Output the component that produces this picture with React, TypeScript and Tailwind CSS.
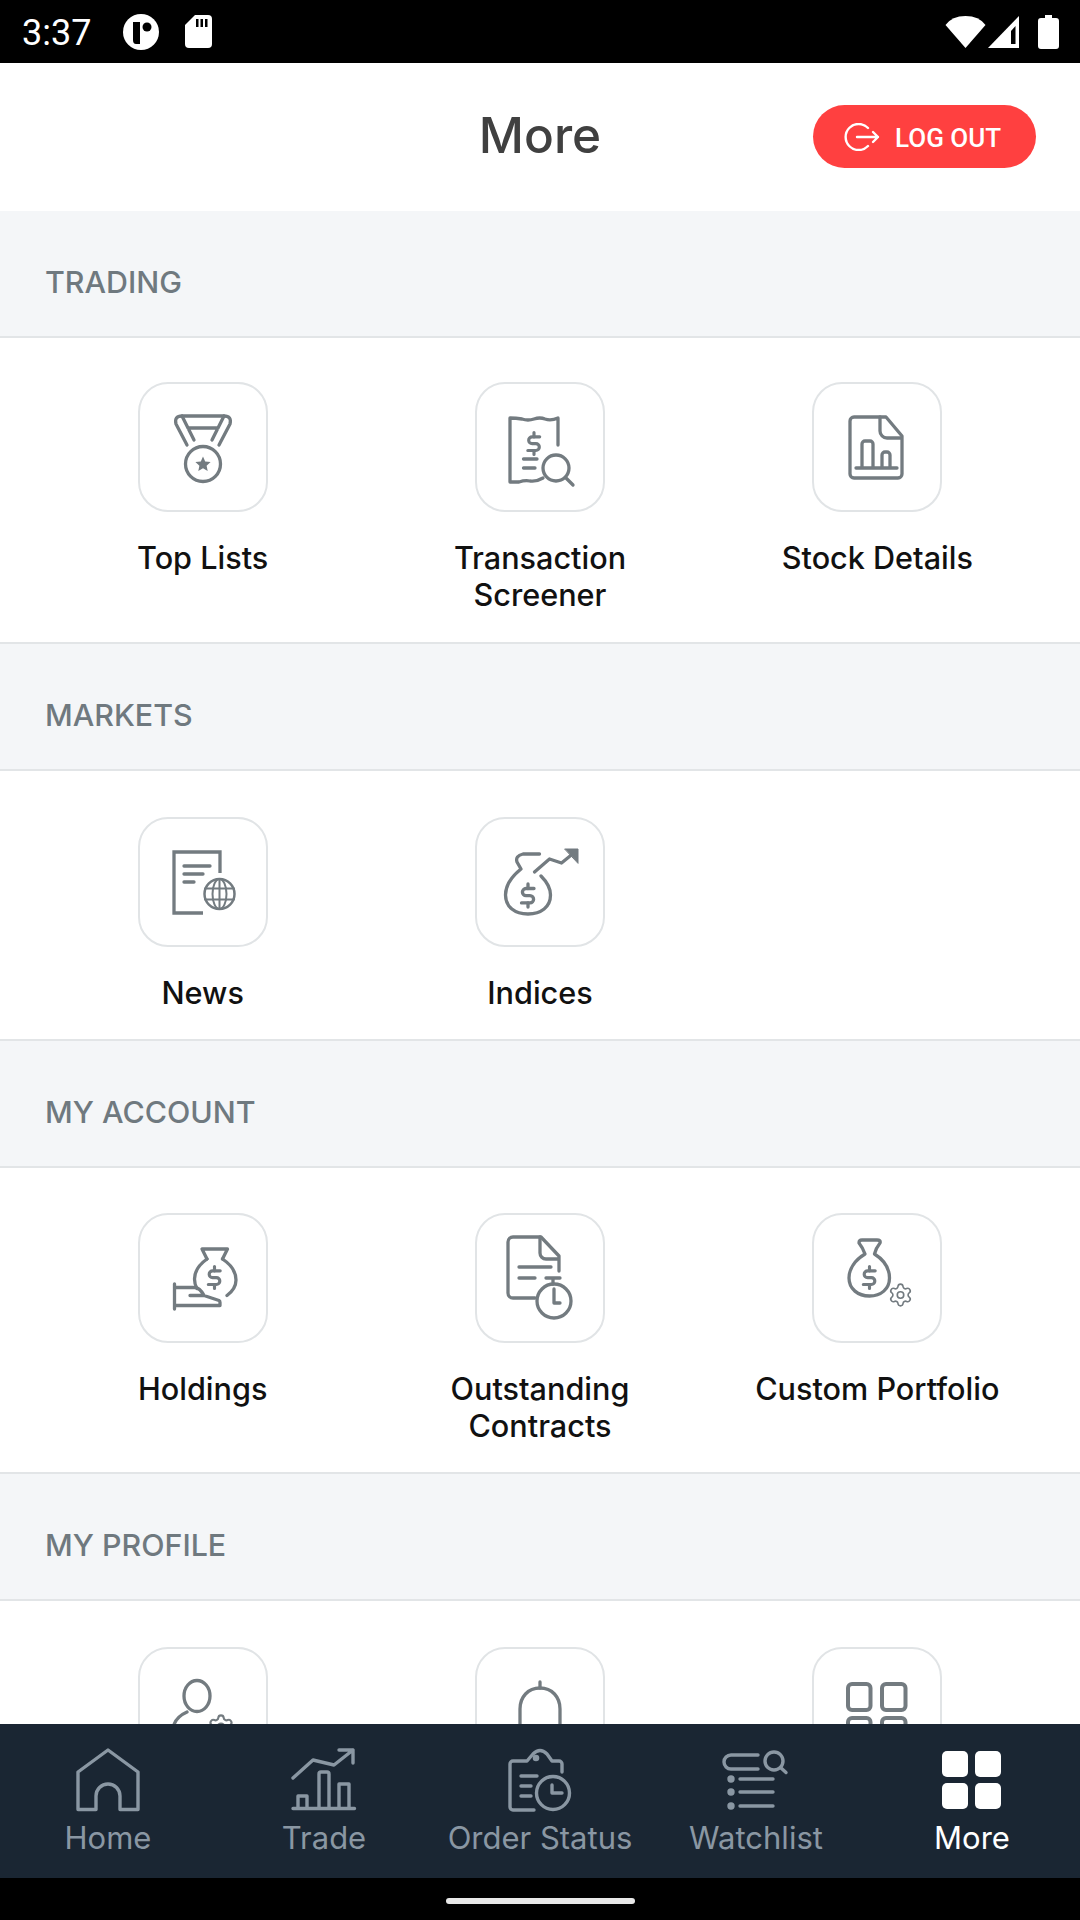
import type { ReactNode } from "react";
import { Settings } from "lucide-react";

// Dollar sign used inside the money bag icons
function Dollar({ x, y, s = 1 }: { x: number; y: number; s?: number }) {
  return (
    <g transform={`translate(${x} ${y}) scale(${s})`}>
      <path d="M6 -6.5 H-2 a3.6 3.6 0 0 0 0 7.2 H2 a3.6 3.6 0 0 1 0 7.2 H-6.5" />
      <path d="M0 -11 V-6.5 M0 8 V12" />
    </g>
  );
}

function BoxIcon({ children }: { children: ReactNode }) {
  return (
    <svg
      viewBox="0 0 130 130"
      className="w-[130px] h-[130px] shrink-0"
      fill="none"
      stroke="#737b80"
      strokeWidth="3.3"
      strokeLinecap="round"
      strokeLinejoin="round"
    >
      {children}
    </svg>
  );
}

const MedalIcon = (
  <BoxIcon>
    <circle cx="65" cy="82" r="17.5" />
    <path d="M65 74.5 l2.2 5 5.4 .6 -4 3.6 1.1 5.3 -4.7 -2.7 -4.7 2.7 1.1 -5.3 -4 -3.6 5.4 -.6z" fill="#737b80" stroke="none" />
    <path d="M49 63 L38 42 Q36 34 44 34 H86 Q94 34 92 42 L81 63" />
    <path d="M44 34 L56 58 M86 34 L74 58 M50 46 H80" />
  </BoxIcon>
);

const ReceiptIcon = (
  <BoxIcon>
    <path d="M83 63 V36 Q76 39 70 37 Q65 35 59 37 Q53 39 47 37 Q41 36 35 36 V100 H44 Q50 98 55 99 Q61 100 68 96" />
    <Dollar x={59} y={61} s={0.95} />
    <path d="M48.5 77 H62 M48.5 86 H60" />
    <circle cx="81" cy="86" r="13" />
    <path d="M90.5 95.5 L98 103" />
  </BoxIcon>
);

const StockDocIcon = (
  <BoxIcon>
    <path d="M67.5 35 H42 a4 4 0 0 0 -4 4 V92 a4 4 0 0 0 4 4 H86 a4 4 0 0 0 4 -4 V54 L74 35 Z" />
    <path d="M68 35 V49 a7 7 0 0 0 7 7 H89" />
    <path d="M44 86 H85" />
    <path d="M50 85 V62 a3 3 0 0 1 3 -3 H58 a3 3 0 0 1 3 3 V85 M70 85 V73 a3 3 0 0 1 3 -3 H75 a3 3 0 0 1 3 3 V85" />
  </BoxIcon>
);

const NewsIcon = (
  <BoxIcon>
    <path d="M82 56 V35 H36 V96 H65" strokeLinecap="butt" strokeLinejoin="miter" />
    <path d="M46 49 H72 M46 57 H65 M46 65 H56" />
    <g strokeWidth="2">
      <circle cx="81.5" cy="77" r="15" strokeWidth="2.5" />
      <ellipse cx="81.5" cy="77" rx="7" ry="15" />
      <path d="M81.5 62 V92 M67 71.5 H96 M67 82.5 H96" />
    </g>
  </BoxIcon>
);

const IndicesIcon = (
  <BoxIcon>
    <path d="M64.5 37 H48 Q40 39 42 45 L46 52 C36 60 30.5 68 30.5 78 C30.5 90 40 97 53 97 C66 97 75.5 90 75.5 78 C75.5 71 72 65 66 59" />
    <Dollar x={53} y={78} s={1} />
    <path d="M59.5 55 L74.5 42 L86.5 46 L100 35" />
    <path d="M90 32 H103 V46 Z" fill="#737b80" strokeWidth="1" />
  </BoxIcon>
);

const HoldingsIcon = (
  <BoxIcon>
    <path d="M69 46 L64 36 H89.5 L84.5 46" />
    <path d="M69 46 C62 51 56.5 58 56.5 66 C56.5 70 57.5 73 59 75.5 M84.5 46 C92 51 98 58 98 67 C98 73 95 78 89 82.5" />
    <Dollar x={76.5} y={64} s={0.95} />
    <path d="M36.5 71 V96 M36.5 74.5 H57 C62 75 64 79 66 82.5 H52 M66 82.5 L81 87.5 Q82 88 82 89.5 V92.5 H36.5" />
  </BoxIcon>
);

const OutstandingIcon = (
  <BoxIcon>
    <path d="M84 58 V43 L66 24 H38 a5 5 0 0 0 -5 5 V80 a5 5 0 0 0 5 5 H60" />
    <path d="M65 24 V40 a6 6 0 0 0 6 6 H83" />
    <path d="M44 54 H76 M44 65 H60 M71 65 H85 M78 65 V71" />
    <circle cx="79" cy="88" r="17" />
    <path d="M79 76 V90 H85" />
  </BoxIcon>
);

const CustomPortfolioIcon = (
  <BoxIcon>
    <path d="M53 41 Q51 35 47 30 Q47 27 50 27 H65 Q69 27 68 30 Q64 35 62.5 41 C72 47 77.5 56 77.5 65 C77.5 76 69 83 57.5 83 C46 83 37 76 37 65 C37 56 43 47 53 41 Z" />
    <Dollar x={57.5} y={64} s={0.95} />
    <Settings x={75.5} y={69} width={26} height={26} strokeWidth={1.5} color="#737b80" />
  </BoxIcon>
);

const ProfileIcon = (
  <BoxIcon>
    <ellipse cx="59" cy="49" rx="13" ry="15.5" />
    <path d="M49 65 C40 69 35 75 35 84 V95" />
    <Settings x={69} y={66} width={28} height={28} strokeWidth={1.8} color="#737b80" />
  </BoxIcon>
);

const BellIcon = (
  <BoxIcon>
    <path d="M65 35 V41" />
    <path d="M45 84 V62 C45 50 53 41 65 41 C77 41 85 50 85 62 V84 L90 92 H40 Z" />
  </BoxIcon>
);

const GridIcon = (
  <BoxIcon>
    <g strokeWidth="4">
      <rect x="36" y="37" width="22.5" height="26" rx="4" />
      <rect x="70" y="37" width="23.5" height="26" rx="4" />
      <rect x="36" y="71" width="22.5" height="26" rx="4" />
      <rect x="70" y="71" width="23.5" height="26" rx="4" />
    </g>
  </BoxIcon>
);

type Item = { label?: ReactNode; icon: ReactNode };
type Section = { title: string; rowClass: string; items: Item[] };

const sections: Section[] = [
  {
    title: "TRADING",
    rowClass: "pt-[44px] pb-[29px]",
    items: [
      { label: "Top Lists", icon: MedalIcon },
      { label: <>Transaction<br />Screener</>, icon: ReceiptIcon },
      { label: "Stock Details", icon: StockDocIcon },
    ],
  },
  {
    title: "MARKETS",
    rowClass: "pt-[46px] pb-[28px]",
    items: [
      { label: "News", icon: NewsIcon },
      { label: "Indices", icon: IndicesIcon },
    ],
  },
  {
    title: "MY ACCOUNT",
    rowClass: "pt-[45px] pb-[28px]",
    items: [
      { label: "Holdings", icon: HoldingsIcon },
      { label: <>Outstanding<br />Contracts</>, icon: OutstandingIcon },
      { label: "Custom Portfolio", icon: CustomPortfolioIcon },
    ],
  },
  {
    // labels of this row sit below the tab bar, so none are drawn
    title: "MY PROFILE",
    rowClass: "pt-[46px] pb-[28px]",
    items: [{ icon: ProfileIcon }, { icon: BellIcon }, { icon: GridIcon }],
  },
];

function TabSvg({ children }: { children: ReactNode }) {
  return (
    <svg
      viewBox="0 0 80 64"
      className="w-[80px] h-[64px]"
      fill="none"
      stroke="#8a97a3"
      strokeWidth="3.4"
      strokeLinecap="round"
      strokeLinejoin="round"
    >
      {children}
    </svg>
  );
}

const tabs: { label: string; active?: boolean; icon: ReactNode }[] = [
  {
    label: "Home",
    icon: (
      <TabSvg>
        <path d="M40 2 L10 24 V61.5 H28 V48 a12 12 0 0 1 24 0 V61.5 H70 V24 Z" />
      </TabSvg>
    ),
  },
  {
    label: "Trade",
    icon: (
      <TabSvg>
        <path d="M9 30 L29 12 L50 17 L69 2 M55 2 H69 V15" />
        <path d="M9 60.5 H70.5 M14 60 V48 H23 V60 M35 60 V26 a2 2 0 0 1 2 -2 H43 a2 2 0 0 1 2 2 V60 M55 60 V36 H65 V60" />
      </TabSvg>
    ),
  },
  {
    label: "Order Status",
    icon: (
      <TabSvg>
        <path d="M62 24 V16 a3 3 0 0 0 -3 -3 H52 L47 6 Q40 -1 33 6 L27 13 H13 a3 3 0 0 0 -3 3 V59 a3 3 0 0 0 3 3 H34" />
        <circle cx="36" cy="10" r="1.6" fill="#8a97a3" />
        <path d="M21 28 H37 M21 38 H31 M21 48 H31" />
        <circle cx="53" cy="45" r="16.5" />
        <path d="M52 37 V45 H62" />
      </TabSvg>
    ),
  },
  {
    label: "Watchlist",
    icon: (
      <TabSvg>
        <path d="M42 7 H15 a7 7 0 0 0 0 14 H42" />
        <circle cx="58" cy="13" r="9" />
        <path d="M64.5 19.5 L70 24.5" />
        <path d="M24 31 H57 M24 44 H57 M24 58 H57" />
        <circle cx="15" cy="31" r="2" fill="#8a97a3" />
        <circle cx="15" cy="44" r="2" fill="#8a97a3" />
        <circle cx="15" cy="58" r="2" fill="#8a97a3" />
      </TabSvg>
    ),
  },
  {
    label: "More",
    active: true,
    icon: (
      <svg viewBox="0 0 80 64" className="w-[80px] h-[64px]" fill="#ffffff">
        <rect x="10" y="3" width="26" height="26" rx="5" />
        <rect x="43" y="3" width="26" height="26" rx="5" />
        <rect x="10" y="35" width="26" height="26" rx="5" />
        <rect x="43" y="35" width="26" height="26" rx="5" />
      </svg>
    ),
  },
];

function StatusBar() {
  return (
    <div className="h-[63px] shrink-0 bg-black flex items-center pl-[22px] pr-[21px] text-white">
      <span className="mt-[3px] font-[Roboto,sans-serif] text-[36px] leading-[60px]">3:37</span>
      <svg viewBox="0 0 36 36" className="w-[36px] h-[36px] ml-[32px]">
        <circle cx="18" cy="18" r="18" fill="#fff" />
        <path d="M10 8 H17 V30 H13 Q10 30 10 26 Z" fill="#000" />
        <circle cx="24" cy="13" r="4.5" fill="#000" />
      </svg>
      <svg viewBox="0 0 27 33" className="w-[27px] h-[33px] ml-[26px]">
        <path d="M10 0 H23 a4 4 0 0 1 4 4 V29 a4 4 0 0 1 -4 4 H4 a4 4 0 0 1 -4 -4 V10 Z" fill="#fff" />
        <path d="M11 4 H13.5 V12 H11 Z M15.5 4 H18 V12 H15.5 Z M20 4 H22.5 V12 H20 Z" fill="#000" />
      </svg>
      <div className="flex-1" />
      <svg viewBox="0 0 41 32" className="w-[41px] h-[32px]">
        <path d="M20.5 32 L0.5 9 Q7 0 20.5 0 Q34 0 40.5 9 Z" fill="#fff" />
      </svg>
      <svg viewBox="0 0 31 32" className="w-[31px] h-[32px] ml-[2px]">
        <path d="M31 0 V32 H0 Z" fill="#fff" />
        <path d="M27.5 10 V28 H23 V15 Z" fill="#000" />
      </svg>
      <svg viewBox="0 0 21 34" className="w-[21px] h-[34px] ml-[19px]">
        <path d="M7 0 H14 V3 H18 a3 3 0 0 1 3 3 V31 a3 3 0 0 1 -3 3 H3 a3 3 0 0 1 -3 -3 V6 a3 3 0 0 1 3 -3 H7 Z" fill="#fff" />
      </svg>
    </div>
  );
}

export default function App() {
  return (
    <div className="w-[1080px] h-[1920px] flex flex-col overflow-hidden bg-white font-[Inter,sans-serif]">
      <StatusBar />

      <div className="relative h-[148px] shrink-0 flex items-center justify-center pb-[3px]">
        <h1 className="text-[49.5px] leading-none font-medium text-[#404040]">More</h1>
        <button className="absolute left-[813px] top-[42px] w-[223px] h-[63px] rounded-full bg-[#ff4040] flex items-center pl-[31px] text-white">
          <svg viewBox="0 0 36 28" className="w-[36px] h-[28px]" fill="none" stroke="#fff" strokeWidth="2.4" strokeLinecap="round" strokeLinejoin="round">
            <path d="M24 5 A13 13 0 1 0 24 23" />
            <path d="M13 14 H34 M29 9 L34 14 L29 19" />
          </svg>
          <span className="ml-[15px] mt-[3px] font-[Roboto,sans-serif] text-[26px] font-medium leading-none">LOG OUT</span>
        </button>
      </div>

      <div className="flex-1 min-h-0 overflow-hidden">
        {sections.map((section) => (
          <div key={section.title}>
            <div className="h-[127px] bg-[#f4f6f8] border-b-2 border-[#e2e5e7] flex items-center pl-[45px] pt-[18px]">
              <span className="text-[30.4px] leading-none font-medium text-[#6f797f]">{section.title}</span>
            </div>
            <div className={`grid grid-cols-3 px-[34px] border-b-2 border-[#e2e5e7] ${section.rowClass}`}>
              {section.items.map((item, i) => (
                <div key={i} className="flex flex-col items-center">
                  <div className="w-[130px] h-[130px] rounded-[30px] border-2 border-[#e1e4e6] flex items-center justify-center">
                    {item.icon}
                  </div>
                  {item.label && (
                    <div className="mt-[27px] text-[30.6px] leading-[37px] font-medium text-[#111111] text-center">
                      {item.label}
                    </div>
                  )}
                </div>
              ))}
            </div>
          </div>
        ))}
      </div>

      <div className="h-[154px] shrink-0 bg-[#1a2633] grid grid-cols-5 pt-[24px]">
        {tabs.map((tab) => (
          <div key={tab.label} className="flex flex-col items-center">
            {tab.icon}
            <span className={`mt-[9px] text-[31px] leading-[34px] whitespace-nowrap ${tab.active ? "text-white" : "text-[#8a97a3]"}`}>
              {tab.label}
            </span>
          </div>
        ))}
      </div>

      <div className="h-[42px] shrink-0 bg-black flex justify-center pt-[20px]">
        <div className="w-[189px] h-[6px] rounded-full bg-[#e8e8e8]" />
      </div>
    </div>
  );
}
